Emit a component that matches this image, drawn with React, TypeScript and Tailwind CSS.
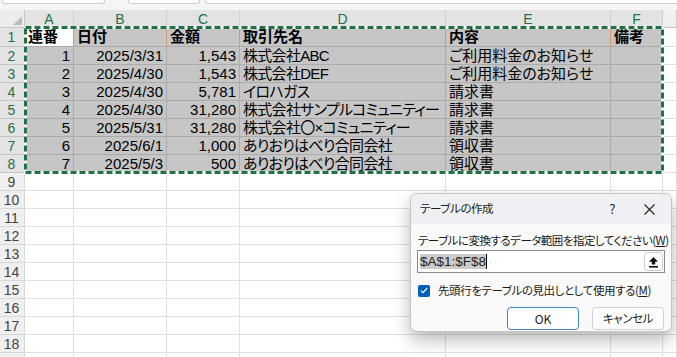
import React from "react";

type Col = { key: string; w: string; sel: boolean };

const cols: Col[] = [
  { key: "A", w: "w-[49px]", sel: true },
  { key: "B", w: "w-[93px]", sel: true },
  { key: "C", w: "w-[73px]", sel: true },
  { key: "D", w: "w-[206px]", sel: true },
  { key: "E", w: "w-[165px]", sel: true },
  { key: "F", w: "w-[52px]", sel: true },
  { key: "", w: "flex-1", sel: false }
];

type Cell = { text: string; align: "l" | "r" };

const header = ["連番", "日付", "金額", "取引先名", "内容", "備考"];

const data: string[][] = [
  ["1", "2025/3/31", "1,543", "株式会社ABC", "ご利用料金のお知らせ", ""],
  ["2", "2025/4/30", "1,543", "株式会社DEF", "ご利用料金のお知らせ", ""],
  ["3", "2025/4/30", "5,781", "イロハガス", "請求書", ""],
  ["4", "2025/4/30", "31,280", "株式会社サンプルコミュニティー", "請求書", ""],
  ["5", "2025/5/31", "31,280", "株式会社〇×コミュニティー", "請求書", ""],
  ["6", "2025/6/1", "1,000", "ありおりはべり合同会社", "領収書", ""],
  ["7", "2025/5/3", "500", "ありおりはべり合同会社", "領収書", ""]
];

const font = "font-['Liberation_Sans','Noto_Sans_CJK_JP',sans-serif] [font-feature-settings:'palt']";
const uiFont = "font-['Noto_Sans_CJK_JP','Liberation_Sans',sans-serif] [font-feature-settings:'palt']";

function rowCells(rowIndex: number): Cell[] {
  if (rowIndex === 0) return header.map((text) => ({ text, align: "l" }));
  const row = data[rowIndex - 1];
  if (!row) return cols.slice(0, 6).map(() => ({ text: "", align: "l" }));
  return row.map((text, i) => ({ text, align: i < 3 ? "r" : "l" }));
}

function ColumnHeaders() {
  return (
    <div className="flex h-[18px] border-b border-[#c6c6c6]">
      <div className="relative w-[25px] shrink-0 border-r border-[#c6c6c6] bg-[#ececec]">
        <div className="absolute bottom-[2px] right-[2px] h-0 w-0 border-b-[9px] border-l-[9px] border-b-[#bdbdbd] border-l-transparent" />
      </div>
      {cols.map((c, i) => (
        <div
          key={i}
          className={[
            c.w,
            "shrink-0 border-r border-[#d0d0d0] text-center text-[14px] leading-[18px]",
            c.sel ? "bg-[#e3e3e3] text-[#217346]" : "bg-[#f0f0f0] text-[#444]"
          ].join(" ")}
        >
          {c.key}
        </div>
      ))}
    </div>
  );
}

function SheetRow({ index }: { index: number }) {
  const inSel = index < 8;
  const cells = rowCells(index);
  const isHeader = index === 0;

  return (
    <div className={[isHeader ? "h-[19px]" : "h-[18px]", "flex shrink-0"].join(" ")}>
      <div
        className={[
          "w-[25px] shrink-0 border-r border-b pr-[1px] text-center text-[14px] leading-[18px]",
          inSel ? "border-[#c6c6c6] bg-[#e3e3e3] text-[#217346]" : "border-[#d8d8d8] bg-[#f0f0f0] text-[#444]"
        ].join(" ")}
      >
        {index < 18 ? index + 1 : ""}
      </div>
      {cols.map((c, i) => {
        const cell = cells[i];
        const active = index === 0 && i === 0;
        const selected = inSel && c.sel;
        const orange = isHeader && i < 5;
        return (
          <div
            key={i}
            className={[
              c.w,
              "shrink-0 overflow-hidden whitespace-nowrap border-b border-r px-[3px] text-[15px] leading-[18px] text-black",
              selected ? "border-[#ababab]" : "border-[#e1e1e1]",
              orange ? "border-r-[#d39a6e]" : "",
              active ? "bg-white" : selected ? "bg-[#c6c6c6]" : "bg-white",
              cell?.align === "r" ? "text-right" : "text-left",
              i === 3 && !isHeader ? "tracking-[-0.7px]" : "",
              isHeader ? "font-bold" : ""
            ].join(" ")}
          >
            {cell?.text}
          </div>
        );
      })}
    </div>
  );
}

function SelectionBorder() {
  return (
    <div className="pointer-events-none absolute left-[24px] top-[26px] h-[148px] w-[640px]">
      <svg width="640" height="148" className="block">
        <rect x="1.5" y="1.5" width="637" height="145" fill="none" stroke="#ffffff" strokeWidth="3" />
        <rect x="1.5" y="1.5" width="637" height="145" fill="none" stroke="#217346" strokeWidth="3" strokeDasharray="6 3" />
      </svg>
    </div>
  );
}

function UploadIcon() {
  return (
    <svg width="11" height="12" viewBox="0 0 11 12">
      <path d="M5.5 1 L1 5.8 H3.8 V8.6 H7.2 V5.8 H10 Z" fill="#111" />
      <rect x="1" y="10" width="9" height="1.6" fill="#111" />
    </svg>
  );
}

function CreateTableDialog() {
  return (
    <div className={`absolute left-[410px] top-[193px] flex h-[139px] w-[262px] flex-col overflow-hidden rounded-[7px] border border-[#c4c4c4] bg-[#f9f9f9] shadow-[0_8px_18px_rgba(0,0,0,0.28)] ${uiFont}`}>
      <div className="flex h-[30px] shrink-0 items-center bg-[#eff0f3] pl-[9px] pr-[16px] text-[11.5px] tracking-[-0.4px] text-[#1b1b1b]">
        <span>テーブルの作成</span>
        <span className="ml-auto mr-[29px] text-[13px]">?</span>
        <svg width="11" height="11" viewBox="0 0 11 11">
          <path d="M0.5 0.5 L10.5 10.5 M10.5 0.5 L0.5 10.5" stroke="#222" strokeWidth="1.1" />
        </svg>
      </div>
      <div className="flex flex-1 flex-col px-[6px] pt-[7px]">
        <div className="whitespace-nowrap pl-[1px] text-[11.5px] leading-[18px] tracking-[-0.5px] text-[#1b1b1b]">
          テーブルに変換するデータ範囲を指定してください(<span className="underline">W</span>)
        </div>
        <div className="mt-[1px] flex h-[23px] items-center border border-[#8a8a8a] bg-white pl-[2px] pr-[1px]">
          <span className="bg-[#cccccc] font-['Liberation_Sans',sans-serif] text-[13.5px] leading-[15px] text-[#222]">$A$1:$F$8</span>
          <span className="h-[15px] w-[1px] bg-black" />
          <div className="ml-auto flex h-[19px] w-[19px] items-center justify-center rounded-[3px] border border-[#cfcfcf] bg-white">
            <UploadIcon />
          </div>
        </div>
        <div className="mt-[9px] flex items-center pl-[1px]">
          <div className="flex h-[12px] w-[12px] items-center justify-center rounded-[2px] bg-[#005fb8]">
            <svg width="8" height="7" viewBox="0 0 8 7">
              <path d="M0.8 3.6 L3 5.6 L7.2 1" fill="none" stroke="#fff" strokeWidth="1.2" />
            </svg>
          </div>
          <span className="ml-[8px] whitespace-nowrap text-[11.5px] tracking-[-0.4px] text-[#1b1b1b]">
            先頭行をテーブルの見出しとして使用する(<span className="underline">M</span>)
          </span>
        </div>
        <div className="mt-[8px] flex justify-end gap-[13px] pr-[1px]">
          <button className="h-[23px] w-[72px] rounded-[4px] border border-[#3c86c6] bg-white text-[12px] text-[#1b1b1b]">OK</button>
          <button className="h-[23px] w-[72px] rounded-[4px] border border-[#d0d0d0] bg-[#fdfdfd] text-[11.5px] tracking-[-0.4px] text-[#1b1b1b]">キャンセル</button>
        </div>
      </div>
    </div>
  );
}

export default function App() {
  return (
    <div className={`relative h-[357px] w-[677px] overflow-hidden bg-white ${font}`}>
      <div className="relative h-[10px] bg-[#f5f5f5]">
        <div className="absolute left-[2px] top-0 h-[4px] w-[103px] rounded-b-[3px] border-x border-b border-[#cfcfcf] bg-white" />
        <div className="absolute left-[128px] top-0 h-[4px] w-[72px] rounded-b-[3px] border-x border-b border-[#cfcfcf] bg-white" />
        <div className="absolute left-[205px] top-0 h-[4px] w-[480px] rounded-b-[3px] border-x border-b border-[#cfcfcf] bg-white" />
      </div>
      <ColumnHeaders />
      <div className="flex flex-col">
        {Array.from({ length: 19 }, (_, i) => (
          <SheetRow key={i} index={i} />
        ))}
      </div>
      <SelectionBorder />
      <CreateTableDialog />
    </div>
  );
}
